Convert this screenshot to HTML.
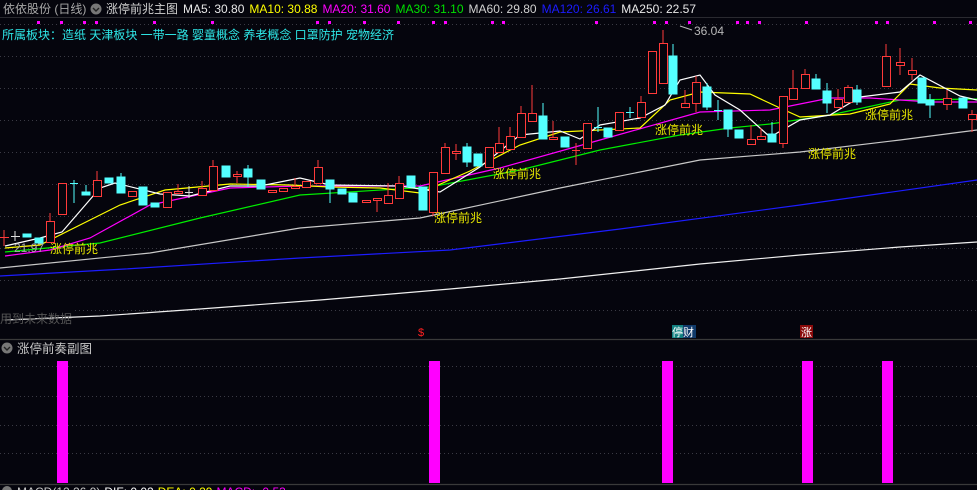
<!DOCTYPE html><html><head><meta charset="utf-8"><style>
html,body{margin:0;padding:0;background:#05050d;width:977px;height:490px;overflow:hidden}
svg{display:block}
text{font-family:"Liberation Sans","Noto Sans CJK SC",sans-serif}
</style></head><body>
<svg width="977" height="490" viewBox="0 0 977 490" xmlns="http://www.w3.org/2000/svg">
<rect width="977" height="490" fill="#05050d"/>
<g stroke="#3a3a44" stroke-dasharray="1,3" stroke-width="1">
<line x1="0" y1="56.5" x2="977" y2="56.5"/><line x1="0" y1="88.5" x2="977" y2="88.5"/><line x1="0" y1="120.5" x2="977" y2="120.5"/><line x1="0" y1="152.5" x2="977" y2="152.5"/><line x1="0" y1="184.5" x2="977" y2="184.5"/><line x1="0" y1="216.5" x2="977" y2="216.5"/><line x1="0" y1="248.5" x2="977" y2="248.5"/><line x1="0" y1="280.5" x2="977" y2="280.5"/><line x1="75" y1="310.5" x2="977" y2="310.5"/>
<line x1="0" y1="366.5" x2="977" y2="366.5"/><line x1="0" y1="396.5" x2="977" y2="396.5"/><line x1="0" y1="425.5" x2="977" y2="425.5"/><line x1="0" y1="453.5" x2="977" y2="453.5"/>
</g>
<line x1="0" y1="24.5" x2="977" y2="24.5" stroke="#3a3a44" stroke-dasharray="1,3"/>
<g fill="#ff00ff">
<rect x="37" y="21" width="3" height="3"/><rect x="60" y="21" width="3" height="3"/><rect x="83" y="21" width="3" height="3"/><rect x="95" y="21" width="3" height="3"/><rect x="153" y="21" width="3" height="3"/><rect x="211" y="21" width="3" height="3"/><rect x="316" y="21" width="3" height="3"/><rect x="328" y="21" width="3" height="3"/><rect x="363" y="21" width="3" height="3"/><rect x="397" y="21" width="3" height="3"/><rect x="432" y="21" width="3" height="3"/><rect x="444" y="21" width="3" height="3"/><rect x="491" y="21" width="3" height="3"/><rect x="502" y="21" width="3" height="3"/><rect x="595" y="21" width="3" height="3"/><rect x="653" y="21" width="3" height="3"/><rect x="665" y="21" width="3" height="3"/><rect x="688" y="21" width="3" height="3"/><rect x="736" y="21" width="3" height="3"/><rect x="746" y="21" width="3" height="3"/><rect x="758" y="21" width="3" height="3"/><rect x="805" y="21" width="3" height="3"/><rect x="875" y="21" width="3" height="3"/><rect x="886" y="21" width="3" height="3"/><rect x="933" y="21" width="3" height="3"/><rect x="969" y="21" width="3" height="3"/>
</g>
<line x1="0" y1="17.5" x2="977" y2="17.5" stroke="#2a2a30"/>
<g fill="none" stroke-width="1.2">
<polyline stroke="#f0f0f0" points="5,320 100,316 200,309 320,300 450,289 560,279 700,264 800,255 900,247 977,242"/>
<polyline stroke="#1c1cff" points="0,276 125,269 300,258 450,250 620,229 800,205 977,180"/>
<polyline stroke="#c8c8c8" points="0,268 150,253 300,228 420,218 560,188 700,160 800,152 900,140 977,130"/>
<polyline stroke="#00ee00" points="5,252 100,243 200,218 300,195 430,187 520,170 600,150 680,135 730,128 770,124 830,115 900,100 977,99"/>
<polyline stroke="#ff00ff" points="5,256 50,250 90,238 150,205 230,188 300,186 420,186 500,168 600,140 700,112 770,110 830,98 870,98 930,102 977,102"/>
<polyline stroke="#ffff00" points="5,248 40,245 80,225 120,205 165,190 230,184 290,185 330,187 380,188 420,193 470,171 520,145 560,132 640,128 670,100 700,92 750,94 780,108 800,117 850,114 890,104 910,84 940,88 977,90"/>
<polyline stroke="#ffffff" points="5,246 40,238 62,232 100,188 115,183 160,194 190,196 230,186 260,186 300,178 330,185 400,186 440,192 480,167 520,135 560,131 580,139 600,125 640,118 665,105 680,80 700,75 715,95 740,110 770,137 800,120 830,115 860,97 900,92 920,75 960,96 977,100"/>
</g>
<g stroke="#ff3a3a" fill="#05050d" stroke-width="1">
<line x1="4" y1="230" x2="4" y2="246"/><line x1="0" y1="237.5" x2="9" y2="237.5"/>
<line x1="50" y1="213" x2="50" y2="242"/><rect x="46.5" y="221.5" width="8" height="21"/>
<rect x="58.5" y="183.5" width="8" height="31"/>
<line x1="97" y1="171" x2="97" y2="196"/><rect x="93.5" y="180.5" width="8" height="16"/>
<rect x="128.5" y="191.5" width="8" height="5"/>
<rect x="163.5" y="192.5" width="8" height="15"/>
<line x1="178" y1="184" x2="178" y2="194"/><rect x="174.5" y="191.5" width="8" height="2"/>
<line x1="202" y1="181" x2="202" y2="196"/><rect x="198.5" y="188.5" width="8" height="7"/>
<line x1="213" y1="160" x2="213" y2="190"/><rect x="209.5" y="166.5" width="8" height="24"/>
<line x1="237" y1="171" x2="237" y2="183"/><rect x="233.5" y="174.5" width="8" height="2"/>
<rect x="268.5" y="190.5" width="8" height="2"/><rect x="279.5" y="188.5" width="8" height="3"/>
<line x1="295" y1="178" x2="295" y2="188"/><rect x="291.5" y="186.5" width="8" height="2"/>
<rect x="302.5" y="181.5" width="8" height="6"/>
<line x1="318" y1="160" x2="318" y2="183"/><rect x="314.5" y="167.5" width="8" height="16"/>
<rect x="362.5" y="200.5" width="8" height="2"/>
<line x1="377" y1="199" x2="377" y2="212"/><rect x="373.5" y="198.5" width="8" height="2"/>
<line x1="388" y1="183" x2="388" y2="203"/><rect x="384.5" y="195.5" width="8" height="8"/>
<line x1="399" y1="176" x2="399" y2="198"/><rect x="395.5" y="183.5" width="8" height="15"/>
<line x1="433" y1="172" x2="433" y2="216"/><rect x="429.5" y="172.5" width="8" height="40"/>
<line x1="445" y1="143" x2="445" y2="173"/><rect x="441.5" y="147.5" width="8" height="26"/>
<line x1="456" y1="144" x2="456" y2="160"/><rect x="452.5" y="151.5" width="8" height="2"/>
<rect x="485.5" y="147.5" width="8" height="20"/>
<line x1="499" y1="127" x2="499" y2="152"/><rect x="495.5" y="143.5" width="8" height="9"/>
<line x1="510" y1="127" x2="510" y2="149"/><rect x="506.5" y="136.5" width="8" height="13"/>
<line x1="521" y1="106" x2="521" y2="137"/><rect x="517.5" y="113.5" width="8" height="24"/>
<line x1="532" y1="85" x2="532" y2="121"/><rect x="528.5" y="113.5" width="8" height="8"/>
<line x1="553" y1="121" x2="553" y2="139"/><rect x="549.5" y="137.5" width="8" height="2"/>
<line x1="576" y1="143" x2="576" y2="165"/><line x1="572" y1="150.5" x2="580" y2="150.5"/>
<rect x="583.5" y="123.5" width="8" height="25"/>
<rect x="615.5" y="112.5" width="8" height="18"/>
<line x1="641" y1="96" x2="641" y2="117"/><rect x="637.5" y="102.5" width="8" height="15"/>
<rect x="648.5" y="51.5" width="8" height="42"/>
<line x1="663" y1="30" x2="663" y2="83"/><rect x="659.5" y="43.5" width="8" height="40"/>
<line x1="685" y1="90" x2="685" y2="107"/><rect x="681.5" y="103.5" width="8" height="4"/>
<line x1="696" y1="76" x2="696" y2="112"/><rect x="692.5" y="82.5" width="8" height="21"/>
<line x1="751" y1="125" x2="751" y2="144"/><rect x="747.5" y="139.5" width="8" height="5"/>
<line x1="761" y1="128" x2="761" y2="139"/><rect x="757.5" y="136.5" width="8" height="3"/>
<line x1="783" y1="96" x2="783" y2="148"/><rect x="779.5" y="96.5" width="8" height="47"/>
<line x1="793" y1="70" x2="793" y2="99"/><rect x="789.5" y="88.5" width="8" height="11"/>
<line x1="805" y1="69" x2="805" y2="88"/><rect x="801.5" y="74.5" width="8" height="14"/>
<line x1="838" y1="89" x2="838" y2="107"/><rect x="834.5" y="99.5" width="8" height="8"/>
<line x1="848" y1="85" x2="848" y2="102"/><rect x="844.5" y="87.5" width="8" height="15"/>
<line x1="886" y1="44" x2="886" y2="86"/><rect x="882.5" y="56.5" width="8" height="30"/>
<line x1="900" y1="48" x2="900" y2="75"/><rect x="896.5" y="62.5" width="8" height="3"/>
<line x1="912" y1="58" x2="912" y2="80"/><rect x="908.5" y="70.5" width="8" height="4"/>
<line x1="947" y1="90" x2="947" y2="110"/><rect x="943.5" y="98.5" width="8" height="6"/>
<line x1="972" y1="110" x2="972" y2="132"/><rect x="968.5" y="114.5" width="8" height="5"/>
</g>
<g fill="#54ffff" stroke="#54ffff" stroke-width="1">
<line x1="15" y1="231" x2="15" y2="241" stroke="#ddd"/><line x1="11" y1="236.5" x2="20" y2="236.5" stroke="#ddd"/>
<rect x="23" y="234" width="8" height="3"/><rect x="35" y="238" width="8" height="5"/>
<line x1="74" y1="180" x2="74" y2="203"/><line x1="70" y1="183.5" x2="78" y2="183.5"/>
<line x1="86" y1="185" x2="86" y2="195"/><rect x="82" y="192" width="8" height="3"/>
<rect x="105" y="178" width="8" height="5"/>
<line x1="121" y1="173" x2="121" y2="193"/><rect x="117" y="177" width="8" height="16"/>
<rect x="139" y="187" width="8" height="18"/><rect x="151" y="203" width="8" height="4"/>
<line x1="189" y1="186" x2="189" y2="198" stroke="#ddd"/><line x1="185" y1="192.5" x2="193" y2="192.5" stroke="#ddd"/>
<rect x="222" y="166" width="8" height="11"/>
<line x1="248" y1="165" x2="248" y2="187"/><rect x="244" y="169" width="8" height="8"/>
<rect x="257" y="180" width="8" height="9"/>
<line x1="330" y1="180" x2="330" y2="203"/><rect x="326" y="180" width="8" height="9"/>
<rect x="338" y="189" width="8" height="5"/><rect x="349" y="193" width="8" height="9"/>
<rect x="407" y="176" width="8" height="11"/>
<rect x="419" y="187" width="8" height="23"/>
<line x1="467" y1="143" x2="467" y2="167"/><rect x="463" y="147" width="8" height="15"/>
<rect x="474" y="154" width="8" height="12"/>
<line x1="543" y1="103" x2="543" y2="139"/><rect x="539" y="116" width="8" height="23"/>
<rect x="561" y="137" width="8" height="10"/>
<line x1="598" y1="107" x2="598" y2="132"/><line x1="594" y1="127.5" x2="602" y2="127.5"/>
<rect x="604" y="128" width="8" height="9"/>
<line x1="630" y1="107" x2="630" y2="118"/><line x1="626" y1="112.5" x2="634" y2="112.5"/>
<line x1="673" y1="44" x2="673" y2="94"/><rect x="669" y="56" width="8" height="38"/>
<line x1="707" y1="83" x2="707" y2="110"/><rect x="703" y="87" width="8" height="20"/>
<line x1="718" y1="100" x2="718" y2="120"/><line x1="714" y1="110.5" x2="722" y2="110.5"/>
<line x1="728" y1="110" x2="728" y2="137"/><rect x="724" y="110" width="8" height="19"/>
<rect x="735" y="130" width="8" height="8"/>
<line x1="772" y1="122" x2="772" y2="142"/><rect x="768" y="134" width="8" height="8"/>
<line x1="816" y1="74" x2="816" y2="89"/><rect x="812" y="79" width="8" height="10"/>
<line x1="827" y1="83" x2="827" y2="113"/><rect x="823" y="91" width="8" height="12"/>
<line x1="857" y1="85" x2="857" y2="105"/><rect x="853" y="90" width="8" height="12"/>
<rect x="918" y="78" width="8" height="25"/>
<line x1="930" y1="94" x2="930" y2="118"/><rect x="926" y="100" width="8" height="5"/>
<rect x="959" y="98" width="8" height="10"/>
</g>
<g fill="#e8e800" font-size="12">
<text x="50" y="253">涨停前兆</text><text x="434" y="222">涨停前兆</text><text x="493" y="178">涨停前兆</text><text x="655" y="134">涨停前兆</text><text x="808" y="158">涨停前兆</text><text x="865" y="119">涨停前兆</text>
</g>
<text x="14" y="252" fill="#a8a8a8" font-size="12">21.97</text>
<text x="694" y="35" fill="#b8b8b8" font-size="12">36.04</text>
<line x1="680" y1="26" x2="692" y2="30" stroke="#b8b8b8"/>
<text x="0" y="323" fill="#555" font-size="12">用到未来数据</text>
<text x="3" y="13" fill="#a8a8a8" font-size="12">依依股份 (日线)</text>
<circle cx="96" cy="9" r="5.5" fill="#777"/><path d="M93 8l3 3 3-3" stroke="#222" fill="none" stroke-width="1.4"/>
<text x="106" y="13" font-size="12"><tspan fill="#d0d0d0">涨停前兆主图</tspan><tspan fill="#e8e8e8" dx="5">MA5: 30.80</tspan><tspan fill="#ffff00" dx="5">MA10: 30.88</tspan><tspan fill="#ff00ff" dx="5">MA20: 31.60</tspan><tspan fill="#00e000" dx="5">MA30: 31.10</tspan><tspan fill="#d0d0d0" dx="5">MA60: 29.80</tspan><tspan fill="#1c1cff" dx="5">MA120: 26.61</tspan><tspan fill="#e8e8e8" dx="5">MA250: 22.57</tspan></text>
<text x="2" y="39" fill="#2ee6e6" font-size="12">所属板块：造纸 天津板块 一带一路 婴童概念 养老概念 口罩防护 宠物经济</text>
<text x="418" y="336" fill="#ff2020" font-size="11">$</text>
<rect x="672" y="325" width="11" height="13" fill="#128080"/><rect x="683" y="325" width="13" height="13" fill="#103a6a"/>
<text x="672" y="336" fill="#fff" font-size="11">停财</text>
<rect x="800" y="325" width="13" height="13" fill="#8a0a0a"/><text x="801" y="336" fill="#fff" font-size="11">涨</text>
<line x1="0" y1="339.5" x2="977" y2="339.5" stroke="#3a3a3a" stroke-width="1.2"/>
<circle cx="7" cy="348" r="5.5" fill="#777"/><path d="M4 347l3 3 3-3" stroke="#222" fill="none" stroke-width="1.4"/>
<text x="17" y="353" fill="#c8c8c8" font-size="12.5">涨停前奏副图</text>
<g fill="#ff00ff">
<rect x="57" y="361" width="11" height="122"/><rect x="429" y="361" width="11" height="122"/><rect x="662" y="361" width="11" height="122"/><rect x="802" y="361" width="11" height="122"/><rect x="882" y="361" width="11" height="122"/>
</g>
<line x1="0" y1="484.5" x2="977" y2="484.5" stroke="#3a3a3a" stroke-width="1.2"/>
<circle cx="7" cy="491" r="5" fill="#777"/>
<text x="17" y="496" font-size="12"><tspan fill="#c8c8c8">MACD(12,26,9)</tspan><tspan fill="#fff" dx="4">DIF: 0.02</tspan><tspan fill="#ff0" dx="4">DEA: 0.29</tspan><tspan fill="#f0f" dx="4">MACD: -0.53</tspan></text>
</svg>
</body></html>
